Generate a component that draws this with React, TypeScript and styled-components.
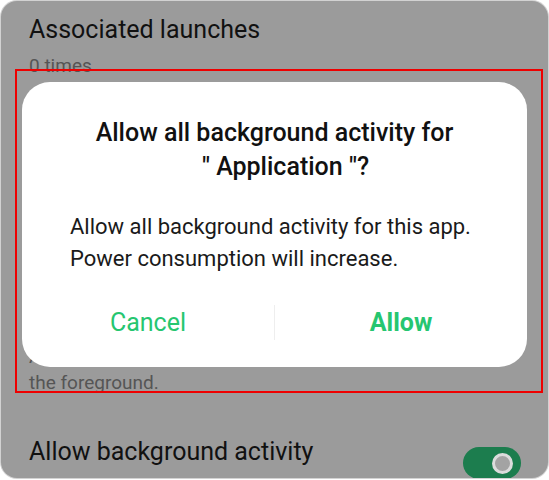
import React from 'react';
import styled, { createGlobalStyle } from 'styled-components';

const Global = createGlobalStyle`
  html, body { margin: 0; padding: 0; background: #ffffff; }
  body { font-family: Roboto, "Noto Sans", Arial, sans-serif; }
  #root { padding: 1px; }
`;

const Screen = styled.div`
  position: relative;
  width: 547px;
  height: 477px;
  background: #9b9b9b;
  border-radius: 16px;
  overflow: hidden;
  box-shadow: 0 0 0 1px #d2d2d2;
`;

const List = styled.div`
  display: flex;
  flex-direction: column;
  padding: 14px 27px 0 28px;
`;

const Row = styled.div<{ $space: number }>`
  display: flex;
  align-items: flex-start;
  justify-content: space-between;
  margin-top: ${(p) => p.$space}px;
`;

const Texts = styled.div`
  display: flex;
  flex-direction: column;
  min-width: 0;
`;

const Title = styled.div`
  font-size: 25px;
  line-height: 30px;
  color: #111111;
  white-space: nowrap;
`;

const Sub = styled.div`
  font-size: 19px;
  line-height: 26px;
  color: #555555;
  margin-top: 8px;
  white-space: pre;
`;

const Toggle = styled.div<{ $on: boolean }>`
  flex: none;
  width: 58px;
  height: 32px;
  margin-top: 10px;
  border-radius: 16px;
  background: ${(p) => (p.$on ? '#1c7d4e' : '#777')};
  display: flex;
  align-items: center;
  justify-content: ${(p) => (p.$on ? 'flex-end' : 'flex-start')};
  padding: 0 8px;
  box-sizing: border-box;
`;

const Knob = styled.div`
  width: 21px;
  height: 21px;
  border-radius: 50%;
  box-sizing: border-box;
  background: #a3a3a3;
  border: 3px solid #dcdcdc;
`;

const Dialog = styled.div`
  position: absolute;
  left: 21px;
  top: 81px;
  width: 505px;
  height: 285px;
  background: #ffffff;
  border-radius: 28px;
  display: flex;
  flex-direction: column;
  padding-top: 34px;
  box-sizing: border-box;
`;

const DialogTitle = styled.div`
  font-size: 25px;
  line-height: 34px;
  font-weight: 500;
  color: #111111;
  text-align: center;
`;

const TitleLine = styled.div<{ $shift?: number }>`
  padding-left: ${(p) => p.$shift ?? 0}px;
  white-space: pre;
`;

const Body = styled.div`
  margin-top: 27px;
  padding: 0 30px 0 48px;
  font-size: 22px;
  line-height: 32px;
  color: #1a1a1a;
`;

const Buttons = styled.div`
  margin-top: 30px;
  display: grid;
  grid-template-columns: 1fr 1px 1fr;
  align-items: center;
`;

const Btn = styled.div<{ $strong?: boolean }>`
  text-align: center;
  font-size: 25px;
  line-height: 35px;
  color: #26c670;
  font-weight: ${(p) => (p.$strong ? 700 : 400)};
`;

const Divider = styled.div`
  width: 1px;
  height: 35px;
  background: #eeeeee;
`;

const Annotation = styled.div`
  position: absolute;
  left: 14px;
  top: 68px;
  width: 528px;
  height: 324px;
  box-sizing: border-box;
  border: 2px solid #ee0000;
  pointer-events: none;
`;

export default function App() {
  return (
    <>
      <Global />
      <Screen>
        <List>
          <Row $space={0}>
            <Texts>
              <Title>Associated launches</Title>
              <Sub>0 times</Sub>
            </Texts>
          </Row>
          <Row $space={227}>
            <Texts>
              <Title>Allow foreground activity</Title>
              <Sub>{'Allow app to keep running while it is in\nthe foreground.'}</Sub>
            </Texts>
          </Row>
          <Row $space={41}>
            <Texts>
              <Title>Allow background activity</Title>
              <Sub>Allow app to keep running in the background.</Sub>
            </Texts>
            <Toggle $on>
              <Knob />
            </Toggle>
          </Row>
        </List>
        <Dialog>
          <DialogTitle>
            <TitleLine>Allow all background activity for</TitleLine>
            <TitleLine $shift={22}>{'" Application "?'}</TitleLine>
          </DialogTitle>
          <Body>
            Allow all background activity for this app.
            <br />
            Power consumption will increase.
          </Body>
          <Buttons>
            <Btn>Cancel</Btn>
            <Divider />
            <Btn $strong>Allow</Btn>
          </Buttons>
        </Dialog>
        <Annotation />
      </Screen>
    </>
  );
}
